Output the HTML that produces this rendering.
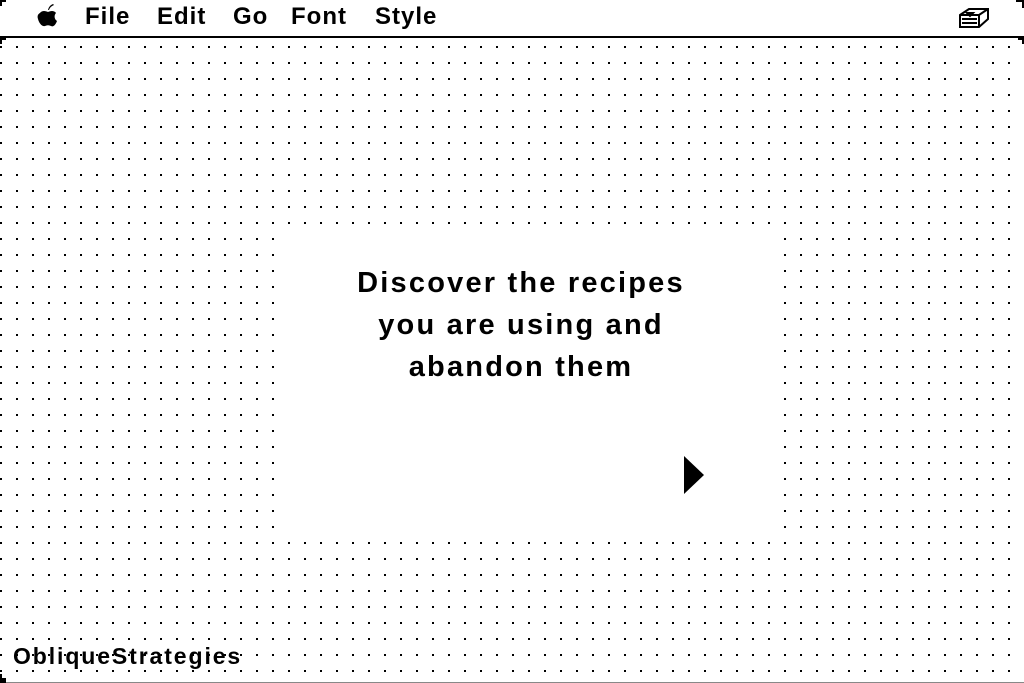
<!DOCTYPE html>
<html><head><meta charset="utf-8"><style>
html,body{margin:0;padding:0;}
body{width:1024px;height:683px;position:relative;overflow:hidden;background:#fff;font-family:"Liberation Sans",sans-serif;}
.bg{position:absolute;left:0;top:0;}
.menu{position:absolute;left:0;top:0;width:1024px;height:36px;background:#fff;border-bottom:2px solid #000;}
.mi{position:absolute;top:2px;font-weight:bold;font-size:24px;line-height:30px;color:#000;letter-spacing:1px;}
.box{position:absolute;left:280px;top:230px;width:498px;height:304px;background:#fff;}
.txt{position:absolute;left:271px;width:500px;text-align:center;font-weight:bold;font-size:29px;letter-spacing:2.2px;line-height:42px;top:262px;}
.lbl{position:absolute;left:13px;top:642px;font-weight:bold;font-size:23px;letter-spacing:1.9px;line-height:28px;}
</style></head><body>
<svg class="bg" width="1024" height="683">
<defs><pattern id="d" x="0" y="14" width="16" height="16" patternUnits="userSpaceOnUse"><rect x="0" y="0" width="2" height="2" fill="#000"/></pattern></defs>
<rect x="0" y="38" width="1024" height="645" fill="url(#d)"/>
<line x1="0" y1="682.5" x2="1024" y2="682.5" stroke="#888" stroke-width="1"/>
</svg>
<div class="menu">
<svg style="position:absolute;left:37px;top:4px" width="22" height="24" viewBox="0 0 22 24"><path d="M11 6 C12 2 14 1 16 0 L17 1 C15 2 13 3 12 6 Z" fill="#000"/><path d="M3 9 C5 6 9 7 11 8 C13 7 17 6 19 9 C17 11 17 15 20 17 C18 22 16 23 14 22 C12 21 10 21 8 22 C5 23 2 19 1 15 C0 12 1 10 3 9 Z" fill="#000"/></svg>
<span class="mi" style="left:85px">File</span>
<span class="mi" style="left:157px">Edit</span>
<span class="mi" style="left:233px">Go</span>
<span class="mi" style="left:291px">Font</span>
<span class="mi" style="left:375px">Style</span>
<svg style="position:absolute;left:957px;top:6px" width="34" height="24" viewBox="0 0 34 24" fill="none" stroke="#000" stroke-width="2"><path d="M3 9 L12 3 L31 3 L31 13 L22 21 L3 21 Z"/><path d="M3 9 L22 9 L31 3 M22 9 L22 21"/><path d="M5 13 L20 13 M5 17 L20 17 M10 7 L16 7 L13 10 Z"/></svg>
</div>
<svg style="position:absolute;left:0;top:0" width="1024" height="683"><path d="M0 38 L6 38 L6 40 L2 40 L2 44 L0 44 Z" fill="#000"/><path d="M1024 38 L1018 38 L1018 40 L1022 40 L1022 44 L1024 44 Z" fill="#000"/><path d="M1016 0 L1024 0 L1024 8 L1022 8 L1022 2 L1016 2Z" fill="#000"/><path d="M0 0 L6 0 L6 2 L2 2 L2 6 L0 6Z" fill="#000"/><path d="M0 674 L2 674 L2 678 L6 678 L6 683 L0 683Z" fill="#000"/></svg>
<div class="box"></div>
<div class="txt">Discover the recipes<br>you are using and<br>abandon them</div>
<svg style="position:absolute;left:683px;top:455px" width="24" height="42"><path d="M1 1 L21 20 L1 39 Z" fill="#000"/><path d="M4 38 L21 21" stroke="#fff" stroke-width="1" stroke-dasharray="2 2"/></svg>
<div class="lbl">ObliqueStrategies</div>
</body></html>
